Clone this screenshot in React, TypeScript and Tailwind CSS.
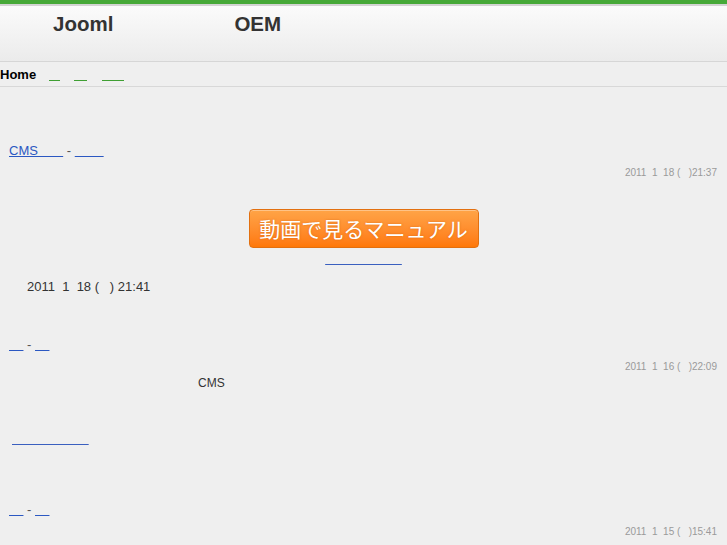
const NB = (n: number) => "\u00a0".repeat(n);

function Dated({ text, className = "" }: { text: string; className?: string }) {
  return (
    <div className={`pr-[10px] text-right text-[10px] leading-[12px] text-[#9a9a9a] whitespace-pre ${className}`}>
      {text}
    </div>
  );
}

function TitleLinks({ a, b, className = "" }: { a: string; b: string; className?: string }) {
  return (
    <div className={`pl-[9px] text-[13px] leading-[16px] whitespace-pre ${className}`}>
      <a className="text-[#2b58c2] underline">{a}</a>
      <span className="text-[#555]"> - </span>
      <a className="text-[#2b58c2] underline">{b}</a>
    </div>
  );
}

export default function App() {
  return (
    <div className="min-h-[545px] bg-[#efefef] font-['Liberation_Sans','Noto_Sans_CJK_JP',sans-serif] text-[#333]">
      <div className="h-[4px] bg-[#46a938]" />
      <div className="h-[2px] bg-[#d3d3d3]" />
      <header className="h-[56px] border-b border-[#d6d6d6] bg-gradient-to-b from-[#fbfbfb] to-[#ebebeb] pl-[53px] pt-[6px]">
        <div className="flex text-[20.5px] font-bold leading-[24px] text-[#333]">
          <span>Jooml</span>
          <span className="ml-[121px]">OEM</span>
        </div>
      </header>
      <nav className="flex h-[25px] border-b border-[#d8d8d8]">
        <span className="pt-[2px] text-[13px] font-bold leading-[22px] text-black">Home</span>
        <a className="ml-[13px] block h-[19px] w-[11px] border-b border-[#3f9f33]" />
        <a className="ml-[14px] block h-[19px] w-[13px] border-b border-[#3f9f33]" />
        <a className="ml-[15px] block h-[19px] w-[22px] border-b border-[#3f9f33]" />
      </nav>

      <TitleLinks className="mt-[56px]" a={`CMS${NB(7)}`} b={NB(8)} />
      <Dated className="mt-[8px]" text={"2011  1  18 (   )21:37"} />

      <div className="mt-[30px] flex justify-center">
        <button className="h-[39px] w-[230px] rounded-[4px] border border-[#e27010] bg-gradient-to-b from-[#ffa446] to-[#ff7806] text-center font-['Noto_Sans_CJK_JP',sans-serif] text-[21px] leading-[37px] text-white shadow-[inset_0_1px_0_rgba(255,255,255,0.35)] [text-shadow:0_0_2px_rgba(180,80,0,0.5)]">
          動画で見るマニュアル
        </button>
      </div>
      <div className="mt-[3px] text-center text-[12px] leading-[16px]">
        <a className="text-[#3a5fbf] underline">{NB(23)}</a>
      </div>
      <div className="mt-[12px] pl-[27px] text-[13px] leading-[16px] text-[#333] whitespace-pre">
        {"2011  1  18 (   ) 21:41"}
      </div>

      <TitleLinks className="mt-[42px]" a={NB(4)} b={NB(4)} />
      <Dated className="mt-[8px]" text={"2011  1  16 (   )22:09"} />
      <div className="mt-[2px] pl-[198px] text-[12px] leading-[16px] text-[#333]">CMS</div>
      <div className="mt-[40px] pl-[12px] text-[12px] leading-[16px]">
        <a className="text-[#3a5fbf] underline">{NB(23)}</a>
      </div>

      <TitleLinks className="mt-[55px]" a={NB(4)} b={NB(4)} />
      <Dated className="mt-[8px]" text={"2011  1  15 (   )15:41"} />
    </div>
  );
}
